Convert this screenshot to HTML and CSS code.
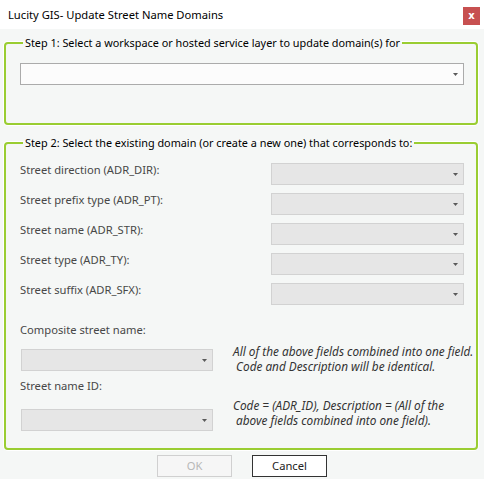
FILE: index.html
```html
<!DOCTYPE html>
<html lang="en">
<head>
<meta charset="utf-8">
<title>Lucity GIS- Update Street Name Domains</title>
<link rel="stylesheet" href="styles.css">
</head>
<body>
<div class="window">
  <header class="titlebar">
    <span class="title">Lucity GIS- Update Street Name Domains</span>
    <button class="close" type="button" aria-label="Close">x</button>
  </header>

  <main class="content">
    <fieldset class="group group-source">
      <legend>Step 1: Select a workspace or hosted service layer to update domain(s) for</legend>
      <div class="combo combo-enabled"><svg class="arrow" width="5" height="3" viewBox="0 0 5 3"><path d="M0 0H5L2.5 3Z"/></svg></div>
    </fieldset>

    <fieldset class="group group-domains">
      <legend>Step 2: Select the existing domain (or create a new one) that corresponds to:</legend>

      <div class="field-grid">
        <label class="field-label">Street direction (ADR_DIR):</label>
        <div class="combo combo-disabled"><svg class="arrow" width="5" height="3" viewBox="0 0 5 3"><path d="M0 0H5L2.5 3Z"/></svg></div>

        <label class="field-label">Street prefix type (ADR_PT):</label>
        <div class="combo combo-disabled"><svg class="arrow" width="5" height="3" viewBox="0 0 5 3"><path d="M0 0H5L2.5 3Z"/></svg></div>

        <label class="field-label">Street name (ADR_STR):</label>
        <div class="combo combo-disabled"><svg class="arrow" width="5" height="3" viewBox="0 0 5 3"><path d="M0 0H5L2.5 3Z"/></svg></div>

        <label class="field-label">Street type (ADR_TY):</label>
        <div class="combo combo-disabled"><svg class="arrow" width="5" height="3" viewBox="0 0 5 3"><path d="M0 0H5L2.5 3Z"/></svg></div>

        <label class="field-label">Street suffix (ADR_SFX):</label>
        <div class="combo combo-disabled"><svg class="arrow" width="5" height="3" viewBox="0 0 5 3"><path d="M0 0H5L2.5 3Z"/></svg></div>
      </div>

      <div class="composite">
        <div class="composite-fields">
          <label class="field-label label-composite">Composite street name:</label>
          <div class="combo combo-disabled combo-composite"><svg class="arrow" width="5" height="3" viewBox="0 0 5 3"><path d="M0 0H5L2.5 3Z"/></svg></div>
          <label class="field-label label-id">Street name ID:</label>
          <div class="combo combo-disabled combo-id"><svg class="arrow" width="5" height="3" viewBox="0 0 5 3"><path d="M0 0H5L2.5 3Z"/></svg></div>
        </div>
        <div class="composite-notes">
          <p class="note">All of the above fields combined into one field.
 Code and Description will be identical.</p>
          <p class="note">Code = (ADR_ID), Description = (All of the
 above fields combined into one field).</p>
        </div>
      </div>
    </fieldset>

    <div class="actions">
      <button class="btn btn-ok" type="button" disabled>OK</button>
      <button class="btn btn-cancel" type="button">Cancel</button>
    </div>
  </main>
</div>
</body>
</html>
```

FILE: styles.css
```css
* {
  box-sizing: border-box;
}

html,
body {
  margin: 0;
  padding: 0;
  height: 100%;
}

body {
  font-family: "Noto Sans", "Open Sans", "Liberation Sans", sans-serif;
  font-size: 11.2px;
  color: #000;
  background: #f5f7f6;
}

.window {
  display: flex;
  flex-direction: column;
  height: 100%;
}

/* title bar */
.titlebar {
  display: flex;
  align-items: flex-start;
  justify-content: space-between;
  height: 29px;
  background: #ffffff;
  padding: 0 4px 0 8px;
}

.title {
  font-size: 11.2px;
  line-height: 16px;
  margin-top: 7px;
  color: #000;
}

.close {
  width: 17px;
  height: 18px;
  margin-top: 7px;
  padding: 0;
  border: 0;
  background: #c75050;
  color: #fff;
  font: bold 10px/16px "DejaVu Sans", sans-serif;
  text-align: center;
}

/* dialog content */
.content {
  flex: 1;
  display: flex;
  flex-direction: column;
  padding: 0 6px 0 4px;
}

.group {
  margin: 0;
  min-inline-size: 0;
  border: 2px solid #9acd32;
  border-radius: 4px;
  box-shadow: 0 0 0 1px #ffffff;
}

.group legend {
  margin-left: 3px;
  padding: 0 2px 0 2px;
  font-size: 10.85px;
  line-height: 16px;
  color: #000;
}

.group-source {
  margin-top: 6px;
  padding: 12px 12px 38px 14px;
}

.group-domains {
  margin-top: 10px;
  padding: 11px 12px 17px 14px;
}

/* combo boxes */
.combo {
  position: relative;
  height: 22px;
  border: 1px solid #ababab;
}

.combo-enabled {
  background: #fcfcfc;
}

.combo-disabled {
  background: #e6e6e6;
  border-color: #d2d2d2;
}

.arrow {
  position: absolute;
  right: 5px;
  top: 9px;
  fill: #5a5a5a;
}

/* attribute rows */
.field-grid {
  display: grid;
  grid-template-columns: 1fr 193px;
  row-gap: 7px;
}

.field-label {
  line-height: 16px;
  color: #474747;
}

.field-grid .combo {
  margin-top: 1px;
}

/* composite section */
.composite {
  display: flex;
  gap: 20px;
  margin-top: 17px;
}

.composite-fields {
  display: flex;
  flex-direction: column;
  width: 193px;
}

.combo-composite,
.combo-id {
  margin-left: 1px;
  width: 192px;
}

.combo-composite {
  margin-top: 11px;
}

.label-id {
  margin-top: 7px;
}

.combo-id {
  margin-top: 15px;
}

.composite-notes {
  display: flex;
  flex-direction: column;
  gap: 24px;
  padding-top: 22px;
}

.note {
  margin: 0;
  white-space: pre;
  font-style: italic;
  font-size: 11.8px;
  line-height: 15px;
  color: #333;
}

/* dialog buttons */
.actions {
  display: flex;
  justify-content: center;
  gap: 20px;
  margin-top: 5px;
  padding-left: 2px;
}

.btn {
  width: 75px;
  height: 22px;
  padding: 0;
  font: inherit;
  line-height: 18px;
  background: #ffffff;
}

.btn-ok {
  border: 1px solid #d0d0d0;
  color: #b8b8b8;
  background: #f6f6f6;
}

.btn-cancel {
  border: 1px solid #333333;
  color: #222;
}
```
